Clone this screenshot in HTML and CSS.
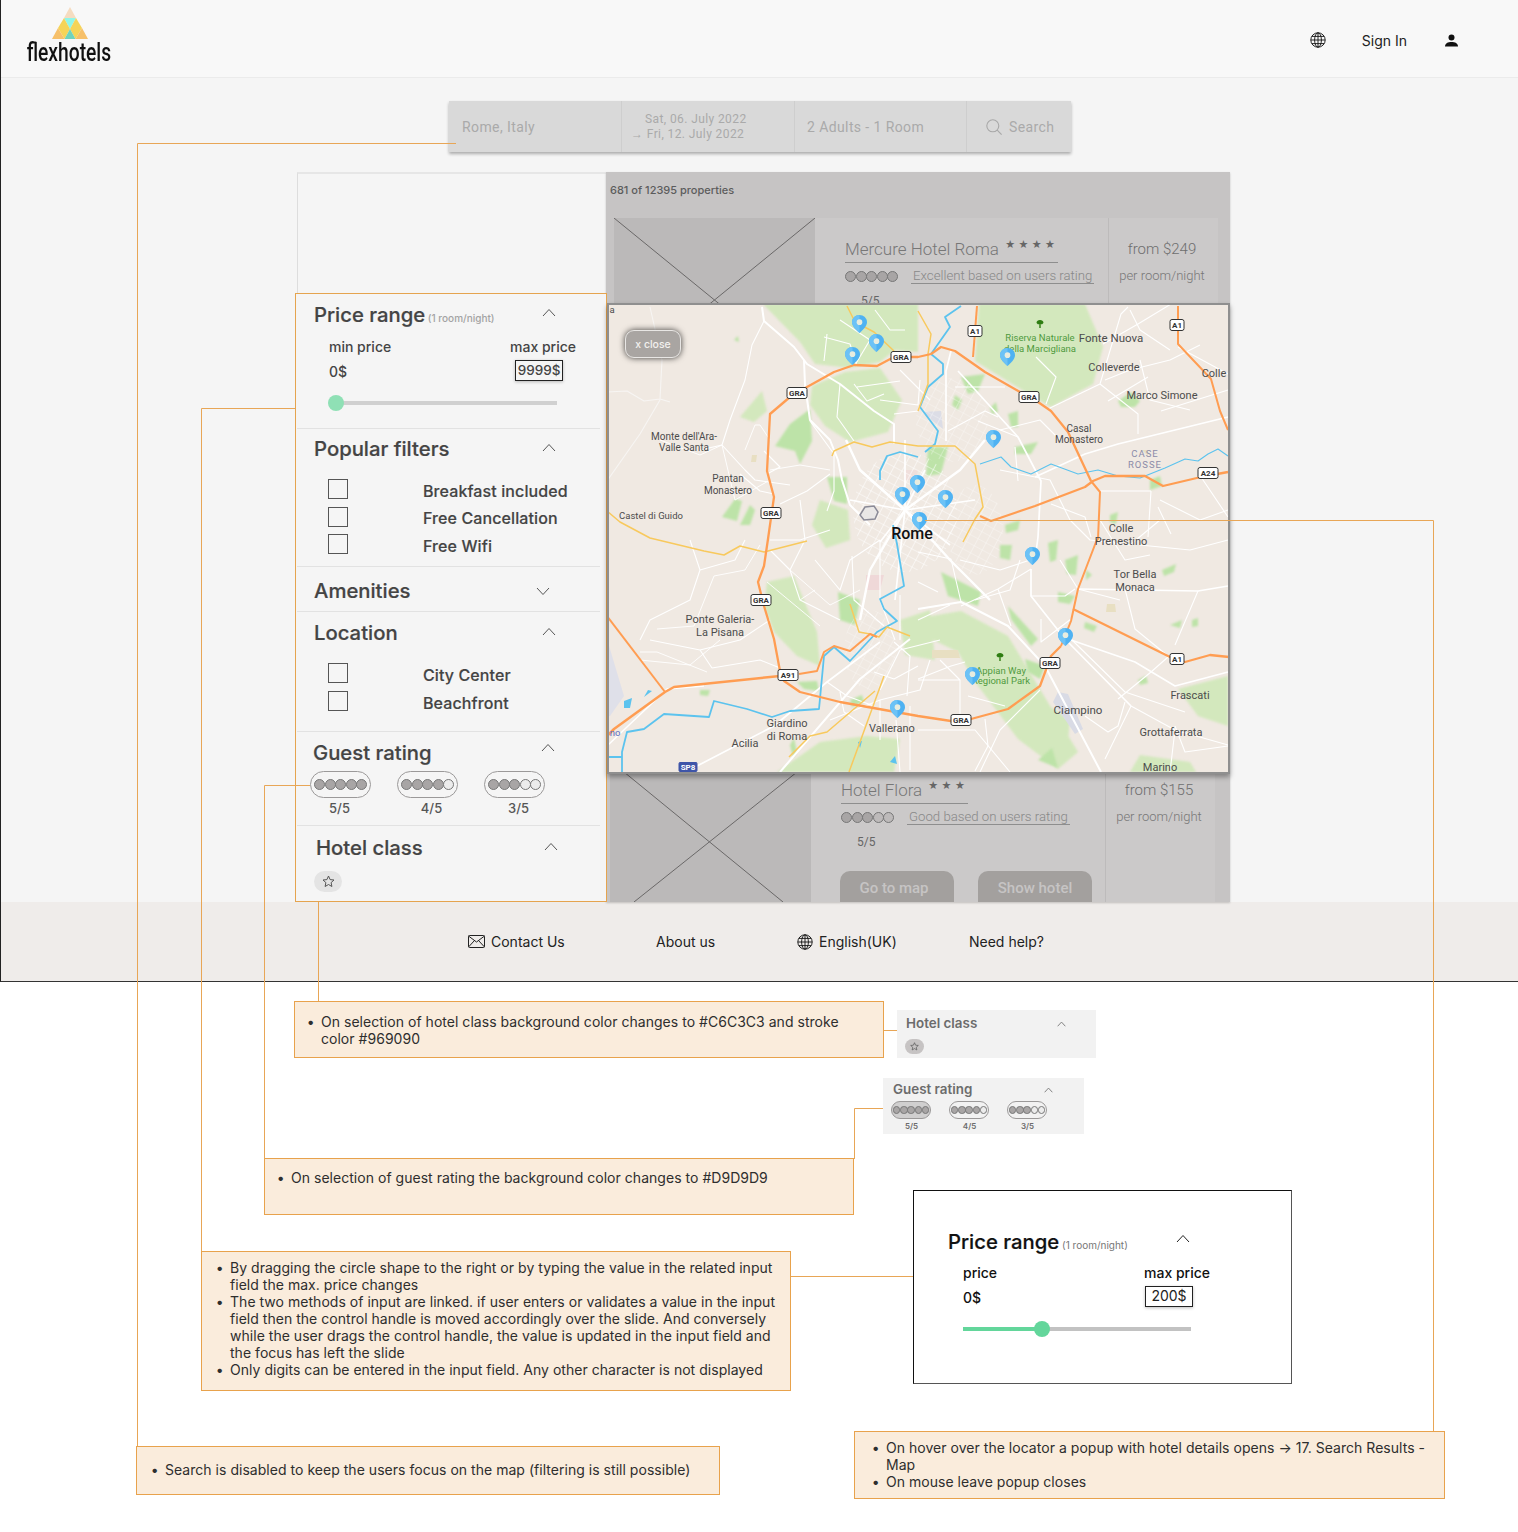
FILE: index.html
```html
<!DOCTYPE html>
<html lang="en">
<head>
    <meta charset="UTF-8">
    <meta name="viewport" content="width=device-width, initial-scale=1.0">
    <title>Search Results - Map - flexhotels</title>
    <link rel="stylesheet" href="styles.css">
</head>
<body>
<div class="page">
    <div class="mock">
        <header class="topbar">
            <div class="logo">
                <svg class="logo-mark" width="38" height="33" viewBox="0 0 38 33">
                    <polygon points="19,0 13,11 25,11" fill="#f6dcc0"/>
                    <polygon points="13,11 25,11 19,22" fill="#92f6e8"/>
                    <polygon points="13,11 19,22 13.5,32 7,21" fill="#f5d458"/>
                    <polygon points="25,11 19,22 24.5,32 31,21" fill="#f5d458"/>
                    <polygon points="19,22 13.5,32 24.5,32" fill="#6fd3bd"/>
                    <polygon points="7,21 1,32 13.5,32" fill="#f6c06a"/>
                    <polygon points="31,21 37,32 24.5,32" fill="#f6c06a"/>
                </svg>
                <span class="logo-text">flexhotels</span>
            </div>
            <div class="topbar-right">
                <svg class="globe" width="16" height="16" viewBox="0 0 16 16">
                    <circle cx="8" cy="8" r="7.2"/><ellipse cx="8" cy="8" rx="3.4" ry="7.2"/>
                    <path d="M8 .8v14.4M.8 8h14.4M1.8 4.4h12.4M1.8 11.6h12.4"/>
                </svg>
                <a class="signin" href="#">Sign In</a>
                <svg width="13" height="13" viewBox="0 0 13 13">
                    <circle cx="6.5" cy="3.4" r="3" fill="#111"/>
                    <path d="M0 12.5c0-3.4 3-4.6 6.5-4.6s6.5 1.2 6.5 4.6z" fill="#111"/>
                </svg>
            </div>
        </header>

        <div class="search-bar">
            <div class="search-seg seg-place">Rome, Italy</div>
            <div class="search-seg seg-dates">
                <span class="date-first">Sat, 06. July 2022</span>
                <span>&rarr; Fri, 12. July 2022</span>
            </div>
            <div class="search-seg seg-guests">2 Adults - 1 Room</div>
            <div class="search-seg seg-go">
                <svg width="16" height="16" viewBox="0 0 16 16" fill="none" stroke="#a8a8a8" stroke-width="1.1">
                    <circle cx="6.8" cy="6.8" r="6"/><path d="M11.2 11.2l4.4 4.4"/>
                </svg>
                Search
            </div>
        </div>

        <div class="frame">
            <aside class="sidebar">
                <div class="filters">
                    <section class="filter-section sec-price">
                        <div class="section-head">
                            <h2 class="section-title">Price range<small> (1 room/night)</small></h2>
                            <svg class="chev" width="14" height="9" viewBox="0 0 14 9"><path d="M1 8l6-6.5L13 8"/></svg>
                        </div>
                        <div class="price-grid">
                            <span>min price</span><span>max price</span>
                            <span class="price-min">0$</span><span class="price-input">9999$</span>
                        </div>
                        <div class="slider"><span class="slider-knob knob-start"></span></div>
                    </section>

                    <section class="filter-section sec-popular">
                        <div class="section-head">
                            <h2 class="section-title">Popular filters</h2>
                            <svg class="chev" width="14" height="9" viewBox="0 0 14 9"><path d="M1 8l6-6.5L13 8"/></svg>
                        </div>
                        <ul class="check-list">
                            <li><span class="check-box"></span><span class="check-label">Breakfast included</span></li>
                            <li><span class="check-box"></span><span class="check-label">Free Cancellation</span></li>
                            <li><span class="check-box"></span><span class="check-label">Free Wifi</span></li>
                        </ul>
                    </section>

                    <section class="filter-section sec-amenities">
                        <div class="section-head">
                            <h2 class="section-title">Amenities</h2>
                            <svg class="chev chev-down" width="14" height="9" viewBox="0 0 14 9"><path d="M1 1l6 6.5L13 1"/></svg>
                        </div>
                    </section>

                    <section class="filter-section sec-location">
                        <div class="section-head">
                            <h2 class="section-title">Location</h2>
                            <svg class="chev" width="14" height="9" viewBox="0 0 14 9"><path d="M1 8l6-6.5L13 8"/></svg>
                        </div>
                        <ul class="check-list">
                            <li><span class="check-box"></span><span class="check-label">City Center</span></li>
                            <li><span class="check-box"></span><span class="check-label">Beachfront</span></li>
                        </ul>
                    </section>

                    <section class="filter-section sec-guest">
                        <div class="section-head">
                            <h2 class="section-title">Guest rating</h2>
                            <svg class="chev" width="14" height="9" viewBox="0 0 14 9"><path d="M1 8l6-6.5L13 8"/></svg>
                        </div>
                        <div class="rating-row">
                            <div class="rating-item">
                                <div class="pill"><i class="dot"></i><i class="dot"></i><i class="dot"></i><i class="dot"></i><i class="dot"></i></div>
                                <div class="rating-label">5/5</div>
                            </div>
                            <div class="rating-item">
                                <div class="pill"><i class="dot"></i><i class="dot"></i><i class="dot"></i><i class="dot"></i><i class="dot dot-off"></i></div>
                                <div class="rating-label">4/5</div>
                            </div>
                            <div class="rating-item">
                                <div class="pill"><i class="dot"></i><i class="dot"></i><i class="dot"></i><i class="dot dot-off"></i><i class="dot dot-off"></i></div>
                                <div class="rating-label">3/5</div>
                            </div>
                        </div>
                    </section>

                    <section class="filter-section sec-class">
                        <div class="section-head">
                            <h2 class="section-title">Hotel class</h2>
                            <svg class="chev" width="14" height="9" viewBox="0 0 14 9"><path d="M1 8l6-6.5L13 8"/></svg>
                        </div>
                        <div class="star-pill">
                            <svg width="13" height="13" viewBox="0 0 13 13"><path d="M6.5 1l1.6 3.6 3.9.4-2.9 2.6.8 3.9-3.4-2-3.4 2 .8-3.9L1 5l3.9-.4z"/></svg>
                        </div>
                    </section>
                </div>
            </aside>

            <div class="results">
                <div class="result-count">681 of 12395 properties</div>

                <article class="card card-first">
                    <div class="card-img">
                        <svg viewBox="0 0 201 164" preserveAspectRatio="none"><path d="M0 0L201 164M201 0L0 164"/></svg>
                    </div>
                    <div class="card-info">
                        <div class="card-title">Mercure Hotel Roma <span class="card-stars">&#9733;&#9733;&#9733;&#9733;</span></div>
                        <div class="card-rating">
                            <div class="card-dots"><i class="dot"></i><i class="dot"></i><i class="dot"></i><i class="dot"></i><i class="dot"></i></div>
                            <span class="rating-text">Excellent based on users rating</span>
                        </div>
                        <div class="card-score">5/5</div>
                    </div>
                    <div class="card-price">
                        <div class="price-from">from $249</div>
                        <div class="price-per">per room/night</div>
                    </div>
                </article>

                <article class="card card-last">
                    <div class="card-img">
                        <svg viewBox="0 0 201 164" preserveAspectRatio="none"><path d="M14 13L173 143M187 13L24 143"/></svg>
                    </div>
                    <div class="card-info">
                        <div class="card-title">Hotel Flora <span class="card-stars">&#9733;&#9733;&#9733;</span></div>
                        <div class="card-rating">
                            <div class="card-dots"><i class="dot"></i><i class="dot"></i><i class="dot"></i><i class="dot dot-faint"></i><i class="dot dot-faint"></i></div>
                            <span class="rating-text">Good based on users rating</span>
                        </div>
                        <div class="card-score">5/5</div>
                        <div class="card-actions">
                            <a class="card-btn" href="#">Go to map</a>
                            <a class="card-btn" href="#">Show hotel</a>
                        </div>
                    </div>
                    <div class="card-price">
                        <div class="price-from">from $155</div>
                        <div class="price-per">per room/night</div>
                    </div>
                </article>
            </div>

            <div class="map">
                <svg class="map-svg" viewBox="609 305 619 467" width="619" height="467">
                    <defs>
                        <pattern id="cityGrid" width="9" height="8" patternUnits="userSpaceOnUse" patternTransform="rotate(28)">
                            <path d="M0 0H9M0 0V8" stroke="#fff" stroke-width="1.2"/>
                        </pattern>
                        <symbol id="pin" viewBox="0 0 16 19" overflow="visible">
                            <path d="M8 0C3.6 0 0 3.4 0 7.6 0 12 5 16.5 8 19c3-2.5 8-7 8-11.4C16 3.4 12.4 0 8 0z" fill="#4fb2f2"/>
                            <path d="M8 0C3.6 0 0 3.4 0 7.6 0 12 5 16.5 8 19z" fill="#6cc2f6"/>
                            <circle cx="8" cy="7.5" r="3" fill="#e8ecdf"/>
                        </symbol>
                    </defs>
                    <rect x="600" y="300" width="640" height="480" fill="#f0e9e2"/>

                    <g class="map-base">
                        <g class="map-soft" fill="#d3e8bd">
                            <path d="M763 304L800 342L815 364L850 368L880 362L895 350L918 352V304Z"/>
                            <path d="M812 386L845 372L880 368L902 400L888 432L850 442L825 426L810 405Z"/>
                            <path d="M979 304H1085L1103 347L1093 384L1051 407L1024 391L975 361Z"/>
                            <path d="M740 417L762 391L767 411L754 422Z"/>
                            <path d="M767 582L794 576L817 632L820 666L797 656L774 632L764 606Z"/>
                            <path d="M777 772L820 742L867 736L900 739L894 772Z"/>
                            <path d="M925 617L961 611L1008 636L1038 686L1078 752L1058 769L1018 739L988 699L975 682L958 652L925 636Z"/>
                            <path d="M1178 689L1228 676V726L1198 716Z"/>
                            <path d="M1130 772L1140 755L1190 762L1196 772Z"/>
                            <path d="M820 500L848 510L850 540L826 548L812 525Z"/>
                            <path d="M900 620L930 610L935 660L905 655Z"/>
                            <path d="M1040 370L1062 380L1060 398L1040 392Z"/>
                            <path d="M1040 700L1070 720L1068 740L1042 722Z"/>
                        </g>
                        <g class="map-soft" fill="#bde3a8">
                            <path d="M775 446L790 424L810 409L812 441L800 464L795 451Z"/>
                            <path d="M722 517L735 499L742 501L737 521Z"/>
                            <path d="M827 477L847 477L847 504L834 501Z"/>
                            <path d="M797 682L817 681L819 691L804 689Z"/>
                            <path d="M941 572L981 592L978 606L948 596Z"/>
                            <path d="M1008 606L1038 639L1031 646L1011 619Z"/>
                            <path d="M1025 659L1045 666L1040 679L1028 672Z"/>
                            <path d="M928 447L948 447L941 474L926 476Z"/>
                            <path d="M961 377L985 374L978 391L968 394Z"/>
                            <path d="M1008 414L1018 411L1018 427L1011 427Z"/>
                            <path d="M1015 447L1038 442L1031 454L1015 454Z"/>
                            <path d="M1118 401L1131 392L1140 401L1135 407L1121 407Z"/>
                            <path d="M1058 592L1075 596L1070 604L1058 602Z"/>
                            <path d="M1162 570L1176 564L1174 572L1164 576Z"/>
                            <path d="M1085 622L1097 626L1094 632L1084 628Z"/>
                            <path d="M1048 543L1058 540L1056 560L1050 562Z"/>
                            <path d="M740 525L750 505L755 510L750 525Z"/>
                            <path d="M1065 560L1078 555L1076 575L1067 574Z"/>
                            <path d="M1038 760L1052 748L1058 768Z"/>
                            <path d="M838 592L860 600L855 625L840 620Z"/>
                            <path d="M734 340L738 336L739 342Z"/>
                            <path d="M700 690L710 690L708 696L700 695Z"/>
                            <path d="M790 745L794 738L797 752L793 758Z"/>
                            <path d="M850 700L862 695L864 702L852 707Z"/>
                            <path d="M990 408L996 402L998 412L992 414Z"/>
                            <path d="M1000 545L1012 545L1010 560L1000 558Z"/>
                            <path d="M1170 625L1182 620L1180 628Z"/>
                            <path d="M1086 570L1092 575L1086 580Z"/>
                            <path d="M1138 680L1146 676L1148 683L1140 685Z"/>
                            <path d="M1192 620L1198 618L1198 626L1192 627Z"/>
                            <path d="M1150 480L1160 476L1162 486L1150 490Z"/>
                            <path d="M1110 515L1118 512L1116 524L1110 522Z"/>
                            <path d="M955 395L962 400L958 410L952 405Z"/>
                            <path d="M1005 525L1020 520L1018 530L1006 533Z"/>
                        </g>
                        <g fill="#e8dfc2">
                            <path d="M752 455L757 455L756 462L751 462Z"/>
                            <path d="M1107 604L1115 604L1116 612L1106 612Z"/>
                            <path d="M932 650L958 650L960 658L932 658Z"/>
                            <path d="M1142 450L1148 450L1148 456Z"/>
                            <path d="M905 470L918 470L916 480L904 480Z" fill="#f0dfdc"/>
                            <path d="M866 575L884 575L880 590L866 590Z" fill="#efd8d8"/>
                        </g>
                        <path d="M607 639L624 696L610 716H607Z" fill="#dfe0e9"/>
                        <path d="M1058 692L1068 694L1083 729L1075 734L1053 702Z" fill="#d9dbe5"/>
                        <path d="M923 412L941 411L943 429L933 421Z" fill="#dcdde6"/>

                        <ellipse cx="905" cy="512" rx="52" ry="60" fill="url(#cityGrid)" opacity=".9"/>
                        <ellipse cx="952" cy="420" rx="36" ry="42" fill="url(#cityGrid)" opacity=".5"/>
                        <ellipse cx="975" cy="530" rx="28" ry="45" fill="url(#cityGrid)" opacity=".55"/>
                        <ellipse cx="870" cy="650" rx="26" ry="40" fill="url(#cityGrid)" opacity=".5"/>

                        <g fill="none" stroke="#fff" stroke-width="1.1" stroke-linejoin="round">
                            <path stroke-width="2" d="M762 307L764 321L794 347L807 364L840 384L874 411L894 424L894 444"/>
                            <path stroke-width="2" d="M804 360L805 385L810 420L830 440L838 460L842 480L850 505L870 525"/>
                            <path stroke-width="2.4" d="M905 510L860 470L846 440M905 510L960 470L985 440M905 510L870 570L860 620M905 510L950 560L990 600"/>
                            <path d="M764 321L752 345L745 380L730 420L722 445L745 470L755 480L790 485"/>
                            <path stroke="#f7f5f3" d="M607 392L627 391L644 401L660 399L670 402M660 400L640 434L607 481M650 307L662 360L660 399"/>
                            <path d="M700 450L722 445M690 540L700 570L690 600L650 620L640 640M700 570L735 560L745 540"/>
                            <path d="M650 640L700 650L712 668M700 650L740 640L770 620M712 668L760 660L780 668"/>
                            <path stroke-width="1.7" d="M697 766L774 726L827 682L880 642"/>
                            <path stroke-width="2" d="M780 772L860 679L910 639"/>
                            <path stroke-width="1.4" d="M607 746L667 689L704 686"/>
                            <path d="M800 500L805 540L790 570L800 600L840 620M770 540L800 540L830 530M790 570L770 550"/>
                            <path d="M815 560L840 590L850 560L880 540M880 540L880 600L895 640"/>
                            <path stroke-width="1.7" d="M880 542L905 510L925 470M860 470L905 510L950 545M905 440L905 510L895 600"/>
                            <path stroke-width="1.7" d="M850 500L905 510L975 500"/>
                            <path d="M880 690L900 650L940 640M880 700L920 690L930 660M896 720L900 772M830 720L880 700L880 740"/>
                            <path stroke-width="2" d="M918 609L961 602L1008 626L1045 666L1101 772"/>
                            <path stroke-width="1.7" d="M1031 569L1031 596L1065 639L1131 706"/>
                            <path stroke-width="1.6" d="M1068 639L1135 662L1175 686L1228 672"/>
                            <path stroke-width="1.7" d="M946 441L946 371L951 351"/>
                            <path stroke-width="1.7" d="M958 371L1018 437L1041 481L1038 537L1035 560"/>
                            <path stroke-width="1.6" d="M1035 477L1085 454L1118 444L1228 417"/>
                            <path d="M1048 409L1100 384L1121 314L1128 307M1036 357L1056 377L1046 404M1100 384L1138 414L1138 434"/>
                            <path d="M1105 380L1130 370L1170 360L1200 345M1130 310L1140 330L1170 350M1140 360L1150 400L1190 410"/>
                            <path stroke-width="1.5" d="M1078 589L1198 591L1228 586"/>
                            <path d="M1198 591L1175 645M1125 589L1135 629L1168 656M1118 699L1151 672L1168 657"/>
                            <path d="M1131 706L1175 730L1228 745M1131 706L1105 759M1175 730L1170 772M1040 690L1000 730L980 772"/>
                            <path d="M918 730L975 730L1010 772M960 720L960 680L940 660M918 680L960 680"/>
                            <path d="M1000 430L1040 420L1060 440M1000 470L1050 480L1070 520L1090 540L1130 545L1160 520"/>
                            <path d="M1100 520L1125 560L1150 555M1160 500L1200 520L1228 510M1140 545L1190 550L1228 540"/>
                            <path d="M960 560L1000 570L1030 560M975 600L1010 590L1020 560M1060 560L1078 589L1120 600"/>
                            <path d="M840 320L870 340L855 365M875 310L890 330L905 330M900 370L930 400M880 400L918 405L920 380"/>
                            <path stroke-width=".9" d="M660 440L700 455L722 445M722 445L735 500L770 480M770 440L760 425L755 425L745 450M770 470L800 465L830 470"/>
                            <path stroke-width=".9" d="M640 660L690 665L720 640M640 652L657 652L707 672M657 629L694 626L714 576M714 576L745 570L760 545"/>
                            <path stroke-width=".9" d="M767 582L820 626M790 570L830 605L860 590M800 600L815 590"/>
                            <path d="M852 556L854 600L884 626M900 595V640M827 682L847 696L874 706M840 692L844 712L864 726M874 672L894 679L918 666"/>
                            <path d="M894 642L910 656L907 696M910 706V770M918 552L951 559L961 602M918 582L938 592M918 620L950 605"/>
                            <path d="M961 606L998 589L1031 569M998 589L1011 626M1031 596L1065 596L1075 589M1041 619V642L1071 619"/>
                            <path d="M1071 639L1125 692L1185 712M968 696L1005 706M985 719L988 746L975 771M918 679L951 666L965 662"/>
                            <path d="M1125 702L1118 726L1108 732L1085 716M1175 726L1185 752L1228 746"/>
                            <path d="M1103 344L1138 324L1171 304M1178 347L1228 374M1108 401L1148 377M1161 411L1228 390"/>
                            <path d="M1098 491L1151 491M1151 491L1148 537M1201 477L1228 517M1158 507L1171 534"/>
                            <path d="M1051 504L1085 517L1091 537M1015 447L1018 481M978 421L1018 437M955 387L1005 387M948 431L985 411L998 417"/>
                            <path d="M894 414L918 411M857 387L900 381M824 337L850 344L857 366M827 334L824 361M854 384L867 401L884 394M840 384L837 417L854 441"/>
                            <path d="M810 421L834 454L834 491L827 511M780 504L807 491L830 474M774 494L760 491L740 474M764 451L780 467L767 474"/>
                        </g>

                        <g fill="none" stroke="#5cc3ee" stroke-width="1.8" stroke-linejoin="round">
                            <path d="M961 306L945 317L950 327L931 354L943 364L943 374L928 387L920 407L938 431L935 444L925 452"/>
                            <path d="M880 480L880 471L887 456L900 452L918 457"/>
                            <path d="M893 525L897 544L904 586L880 599L884 609L897 621L877 632L850 661L834 647L824 656L819 709L790 711L772 717L747 709L714 701L709 717L664 714L644 729L627 732L622 752V772M607 757H622"/>
                            <path stroke-width="1.1" d="M980 464L1001 457L1011 467L1031 474L1051 464L1078 474L1098 470L1118 476L1140 478L1165 468L1185 459L1198 461L1208 454L1218 449L1228 456"/>
                        </g>
                        <g fill="#5cc3ee">
                            <path d="M624 701L632 698L630 708L624 708Z"/>
                            <path d="M648 690L652 691L644 697Z"/>
                            <path d="M858 742L862 741L860 748Z"/>
                            <path d="M890 762L895 756L897 764Z"/>
                        </g>

                        <g fill="none" stroke="#f8c95d" stroke-width="1.5" stroke-linejoin="round">
                            <path d="M847 306L855 322L874 332L894 351"/>
                            <path d="M918 311L931 334L928 354V384L918 411"/>
                            <path d="M832 456L834 451L854 442L872 447L890 442L918 446L955 446L975 464L983 507L975 519L963 542"/>
                            <path d="M607 511L620 522L650 538L704 551L724 555L740 546L764 552L807 541"/>
                            <path d="M789 757L810 736L827 732L875 691"/>
                            <path d="M849 772L860 742L884 676"/>
                            <path d="M850 604L859 632L870 634L879 637L887 627L910 636"/>
                        </g>

                        <g fill="none" stroke="#ff9d52" stroke-width="2" stroke-linejoin="round">
                            <path stroke-width="2.3" d="M780 671L774 639L764 606L758 582L764 566L768 539L774 497L767 471L770 414L790 397L807 387L834 372L854 365L877 366L894 357L918 357L931 354L941 347L955 351L985 372L1020 392L1038 402L1051 411L1068 432L1091 481"/>
                            <path d="M1091 481L1100 492L1098 539L1096 542L1078 589L1071 621L1061 646"/>
                            <path stroke-width="2.3" d="M1061 646L1051 656L1040 686L1008 709L971 719L951 721L918 716L840 702L800 692L784 681L780 671"/>
                            <path stroke-width="2.3" d="M980 516L991 521L1035 506L1085 487L1093 481L1105 476H1145L1163 486L1201 477L1228 472"/>
                            <path d="M977 306L973 357"/>
                            <path d="M1178 306V344L1211 379L1220 411L1228 430"/>
                            <path stroke-width="2.3" d="M1073 609L1170 657L1185 662L1210 655L1229 657"/>
                            <path stroke-width="2.5" d="M780 676L674 687L665 692L614 729L607 736"/>
                            <path d="M607 616L665 692"/>
                            <path d="M799 674L817 671L824 652L834 646L850 651L870 634L877 637"/>
                        </g>
                    </g>

                    <path d="M860 515L865 507L874 506L878 512L875 519L864 520Z" fill="#e9e7e6" stroke="#8a8a97" stroke-width="1.5"/>

                    <g class="map-shields">
                        <g transform="translate(901 357)"><rect x="-10" y="-5.5" width="20" height="11" rx="2"/><text y="3">GRA</text></g>
                        <g transform="translate(797 393)"><rect x="-10" y="-5.5" width="20" height="11" rx="2"/><text y="3">GRA</text></g>
                        <g transform="translate(1029 397)"><rect x="-10" y="-5.5" width="20" height="11" rx="2"/><text y="3">GRA</text></g>
                        <g transform="translate(771 513)"><rect x="-10" y="-5.5" width="20" height="11" rx="2"/><text y="3">GRA</text></g>
                        <g transform="translate(761 600)"><rect x="-10" y="-5.5" width="20" height="11" rx="2"/><text y="3">GRA</text></g>
                        <g transform="translate(1050 663)"><rect x="-10" y="-5.5" width="20" height="11" rx="2"/><text y="3">GRA</text></g>
                        <g transform="translate(961 720)"><rect x="-10" y="-5.5" width="20" height="11" rx="2"/><text y="3">GRA</text></g>
                        <g transform="translate(975 331)"><rect x="-7" y="-5.5" width="14" height="11" rx="2"/><text y="3">A1</text></g>
                        <g transform="translate(1177 325)"><rect x="-7" y="-5.5" width="14" height="11" rx="2"/><text y="3">A1</text></g>
                        <g transform="translate(1177 659)"><rect x="-7" y="-5.5" width="14" height="11" rx="2"/><text y="3">A1</text></g>
                        <g transform="translate(1208 473)"><rect x="-10" y="-5.5" width="20" height="11" rx="2"/><text y="3">A24</text></g>
                        <g transform="translate(788 675)"><rect x="-10" y="-5.5" width="20" height="11" rx="2"/><text y="3">A91</text></g>
                        <g class="shield-blue" transform="translate(688 767)"><rect x="-9" y="-4.5" width="18" height="9" rx="1"/><text y="3">SP8</text></g>
                    </g>

                    <g fill="#2f7d12">
                        <path d="M1040 320a3.5 3 0 0 1 3.5 2.6a1.8 1.8 0 0 1-2.8 1.3V328h-1.4v-4.1a1.8 1.8 0 0 1-2.8-1.3a3.5 3 0 0 1 3.5-2.6z"/>
                        <path d="M1000 653a3.5 3 0 0 1 3.5 2.6a1.8 1.8 0 0 1-2.8 1.3V661h-1.4v-4.1a1.8 1.8 0 0 1-2.8-1.3a3.5 3 0 0 1 3.5-2.6z"/>
                    </g>

                    <g class="map-labels">
                        <text class="lbl-green" x="1040" y="341">Riserva Naturale</text>
                        <text class="lbl-green" x="1040" y="352">della Marcigliana</text>
                        <text class="lbl-green" x="1001" y="674">Appian Way</text>
                        <text class="lbl-green" x="1001" y="684">Regional Park</text>
                        <text class="lbl-big" x="1111" y="342">Fonte Nuova</text>
                        <text x="1114" y="371">Colleverde</text>
                        <text x="1214" y="377">Colle</text>
                        <text x="1162" y="399">Marco Simone</text>
                        <text class="lbl-small" x="1079" y="432">Casal</text>
                        <text class="lbl-small" x="1079" y="443">Monastero</text>
                        <text class="lbl-case" x="1145" y="457">CASE</text>
                        <text class="lbl-case" x="1145" y="468">ROSSE</text>
                        <text class="lbl-small" x="684" y="440">Monte dell'Ara-</text>
                        <text class="lbl-small" x="684" y="451">Valle Santa</text>
                        <text class="lbl-small" x="728" y="482">Pantan</text>
                        <text class="lbl-small" x="728" y="494">Monastero</text>
                        <text class="lbl-tiny" x="651" y="519">Castel di Guido</text>
                        <text class="lbl-city" x="912" y="539">Rome</text>
                        <text x="1121" y="532">Colle</text>
                        <text x="1121" y="545">Prenestino</text>
                        <text x="1135" y="578">Tor Bella</text>
                        <text x="1135" y="591">Monaca</text>
                        <text x="720" y="623">Ponte Galeria-</text>
                        <text x="720" y="636">La Pisana</text>
                        <text x="1190" y="699">Frascati</text>
                        <text class="lbl-big" x="1078" y="714">Ciampino</text>
                        <text x="1171" y="736">Grottaferrata</text>
                        <text x="1160" y="771">Marino</text>
                        <text x="787" y="727">Giardino</text>
                        <text x="787" y="740">di Roma</text>
                        <text x="745" y="747">Acilia</text>
                        <text x="892" y="732">Vallerano</text>
                        <text class="lbl-blue" x="615" y="736">no</text>
                        <text class="lbl-tiny" x="612" y="313">a</text>
                    </g>

                    <use href="#pin" x="852" y="315" width="15" height="18"/>
                    <use href="#pin" x="869" y="334" width="15" height="18"/>
                    <use href="#pin" x="845" y="347" width="15" height="18"/>
                    <use href="#pin" x="1000" y="348" width="15" height="18"/>
                    <use href="#pin" x="986" y="430" width="15" height="18"/>
                    <use href="#pin" x="910" y="475" width="15" height="18"/>
                    <use href="#pin" x="895" y="487" width="15" height="18"/>
                    <use href="#pin" x="938" y="490" width="15" height="18"/>
                    <use href="#pin" x="912" y="512" width="15" height="18"/>
                    <use href="#pin" x="1025" y="547" width="15" height="18"/>
                    <use href="#pin" x="1058" y="628" width="15" height="18"/>
                    <use href="#pin" x="965" y="667" width="15" height="18"/>
                    <use href="#pin" x="890" y="700" width="15" height="18"/>
                </svg>
                <button class="map-close">x close</button>
            </div>
        </div>

        <footer class="footer">
            <a href="#">
                <svg width="17" height="13" viewBox="0 0 17 13" fill="none" stroke="#222"><rect x=".5" y=".5" width="16" height="12" rx="1"/><path d="M.5 1l8 6 8-6M.5 12l6-6.5M16.5 12l-6-6.5"/></svg>
                Contact Us
            </a>
            <a href="#">About us</a>
            <a href="#">
                <svg class="globe" width="16" height="16" viewBox="0 0 16 16">
                    <circle cx="8" cy="8" r="7.2"/><ellipse cx="8" cy="8" rx="3.4" ry="7.2"/>
                    <path d="M8 .8v14.4M.8 8h14.4M1.8 4.4h12.4M1.8 11.6h12.4"/>
                </svg>
                English(UK)
            </a>
            <a href="#">Need help?</a>
        </footer>
    </div>

    <div class="notes">
        <div class="note note-class">
            <ul>
                <li>On selection of hotel class background color changes to #C6C3C3 and stroke color #969090</li>
            </ul>
        </div>
        <div class="note note-guest">
            <ul>
                <li>On selection of guest rating the background color changes to #D9D9D9</li>
            </ul>
        </div>
        <div class="note note-slider">
            <ul>
                <li>By dragging the circle shape to the right or by typing the value in the related input field the max. price changes</li>
                <li>The two methods of input are linked. if user enters or validates a value in the input field then the control handle is moved accordingly over the slide. And conversely while the user drags the control handle, the value is updated in the input field and the focus has left the slide</li>
                <li>Only digits can be entered in the input field. Any other character is not displayed</li>
            </ul>
        </div>
        <div class="note note-search">
            <ul>
                <li>Search is disabled to keep the users focus on the map (filtering is still possible)</li>
            </ul>
        </div>
        <div class="note note-hover">
            <ul>
                <li>On hover over the locator a popup with hotel details opens &rarr; 17. Search Results - Map</li>
                <li>On mouse leave popup closes</li>
            </ul>
        </div>

        <div class="mini mini-class">
            <div class="mini-head">
                <span>Hotel class</span>
                <svg class="chev" width="9" height="6" viewBox="0 0 14 9"><path d="M1 8l6-6.5L13 8"/></svg>
            </div>
            <div class="mini-star">
                <svg width="9" height="9" viewBox="0 0 13 13"><path d="M6.5 1l1.6 3.6 3.9.4-2.9 2.6.8 3.9-3.4-2-3.4 2 .8-3.9L1 5l3.9-.4z"/></svg>
            </div>
        </div>

        <div class="mini mini-guest">
            <div class="mini-head">
                <span>Guest rating</span>
                <svg class="chev" width="9" height="6" viewBox="0 0 14 9"><path d="M1 8l6-6.5L13 8"/></svg>
            </div>
            <div class="mini-row">
                <div class="mini-item">
                    <div class="pill pill-on"><i class="dot"></i><i class="dot"></i><i class="dot"></i><i class="dot"></i><i class="dot"></i></div>
                    <div class="mini-label">5/5</div>
                </div>
                <div class="mini-item">
                    <div class="pill"><i class="dot"></i><i class="dot"></i><i class="dot"></i><i class="dot"></i><i class="dot dot-off"></i></div>
                    <div class="mini-label">4/5</div>
                </div>
                <div class="mini-item">
                    <div class="pill"><i class="dot"></i><i class="dot"></i><i class="dot"></i><i class="dot dot-off"></i><i class="dot dot-off"></i></div>
                    <div class="mini-label">3/5</div>
                </div>
            </div>
        </div>

        <div class="price-box">
            <div class="section-head">
                <h2 class="section-title">Price range<small> (1 room/night)</small></h2>
                <svg class="chev" width="14" height="9" viewBox="0 0 14 9"><path d="M1 8l6-6.5L13 8"/></svg>
            </div>
            <div class="price-grid">
                <span>price</span><span>max price</span>
                <span class="price-min">0$</span><span class="price-input">200$</span>
            </div>
            <div class="slider slider-wide">
                <span class="slider-fill"></span>
                <span class="slider-knob knob-set"></span>
            </div>
        </div>
    </div>

    <svg class="connectors" width="1518" height="1532" viewBox="0 0 1518 1532">
        <path d="M456 143.5H137.5V1446"/>
        <path d="M295 408.5H201.5V1251"/>
        <path d="M310 785.5H264.5V1159"/>
        <path d="M318.5 902V1001"/>
        <path d="M884 1030.5H897"/>
        <path d="M854.5 1159V1108.5H883"/>
        <path d="M791 1276.5H913"/>
        <path d="M925 520.5H1433.5V1431"/>
    </svg>
</div>
</body>
</html>
```

FILE: styles.css
```css
body {
    margin: 0;
    background-color: white;
    font-family: Inter, "Liberation Sans", sans-serif;
    color: #333;
}
ul {
    margin: 0;
}
h2 {
    margin: 0;
}
.page {
    position: relative;
    width: 1518px;
    height: 1532px;
    overflow: hidden;
}
.mock {
    box-sizing: border-box;
    height: 982px;
    background-color: #f5f5f5;
    border-left: 1px solid #222;
    border-bottom: 1px solid #333;
}

/* top bar */
.topbar {
    box-sizing: border-box;
    height: 78px;
    padding: 7px 60px 0 26px;
    background-color: #f8f8f8;
    border-bottom: 1px solid #ebebeb;
    display: flex;
    justify-content: space-between;
}
.logo {
    display: flex;
    flex-direction: column;
    align-items: center;
    width: 85px;
}
.logo-mark {
    display: block;
}
.logo-text {
    font-family: Roboto, sans-serif;
    font-size: 25px;
    font-weight: 500;
    line-height: 24px;
    color: #111;
    margin: 1px 0 0 -2px;
    transform: scaleX(0.77);
}
.topbar-right {
    display: flex;
    align-items: center;
    height: 64px;
    margin-top: 1px;
}
.globe {
    fill: none;
    stroke: #111;
    stroke-width: 0.9;
}
.signin {
    font-size: 14px;
    color: #222;
    text-decoration: none;
    margin: 0 38px 0 36px;
}

/* disabled search bar */
.search-bar {
    display: flex;
    width: 622px;
    height: 51px;
    margin: 23px 0 0 448px;
    background-color: #d9d9d9;
    box-shadow: 0 2px 3px rgba(0,0,0,0.3);
    font-family: Roboto, sans-serif;
    font-size: 14px;
    color: #aaa;
}
.search-seg {
    box-sizing: border-box;
    border-left: 1px solid #cecece;
    display: flex;
    align-items: center;
    letter-spacing: 0.4px;
}
.seg-place {
    width: 172px;
    padding-left: 13px;
    border-left: 0;
}
.seg-dates {
    width: 173px;
    padding-left: 9px;
    font-size: 12px;
    line-height: 15px;
    flex-direction: column;
    align-items: flex-start;
    justify-content: center;
}
.date-first {
    margin-left: 14px;
}
.seg-guests {
    width: 172px;
    padding-left: 12px;
}
.seg-go {
    flex: 1;
    padding-left: 19px;
    gap: 7px;
}

/* frame with filters, results and map */
.frame {
    position: relative;
    display: flex;
    width: 933px;
    height: 730px;
    margin: 20px 0 0 296px;
}
.sidebar {
    box-sizing: border-box;
    width: 309px;
    padding-top: 121px;
    border-top: 2px solid #e6e6e6;
    border-left: 1px solid #ddd;
}
.filters {
    box-sizing: border-box;
    width: 312px;
    height: 609px;
    margin: -2px 0 0 -3px;
    background-color: #f5f5f5;
    border: 1px solid #e5a44f;
    position: relative;
    z-index: 1;
}
.filter-section {
    margin: 0 6px 0 1px;
    padding-left: 17px;
    border-bottom: 1px solid #e2e2e2;
}
.filter-section:last-child {
    border-bottom: 0;
}
.sec-price {
    padding-top: 8px;
    padding-bottom: 23px;
}
.sec-popular {
    padding-top: 6px;
    padding-bottom: 12px;
}
.sec-amenities {
    padding-top: 10px;
    padding-bottom: 8px;
}
.sec-location {
    padding-top: 7px;
    padding-bottom: 20px;
}
.sec-guest {
    padding-top: 7px;
    padding-bottom: 9px;
    padding-left: 16px;
}
.sec-class {
    padding-top: 8px;
    padding-left: 19px;
}
.section-head {
    display: flex;
    justify-content: space-between;
    align-items: center;
    width: 242px;
    height: 26px;
}
.section-title {
    margin-top: 2px;
    font-size: 20.3px;
    line-height: 26px;
    font-weight: 500;
    color: #444;
    white-space: nowrap;
    -webkit-text-stroke: 0.2px #444;
}
.sec-price .section-title {
    margin-top: 2px;
}
.section-title small {
    font-size: 10px;
    font-weight: 500;
    color: #a3a3a3;
    -webkit-text-stroke: 0;
}
.chev {
    fill: none;
    stroke: #555;
    stroke-width: 1;
    margin-top: -2px;
}
.sec-price .chev {
    margin-top: -5px;
}
.sec-guest .chev {
    margin-top: -8px;
}
.sec-class .chev {
    margin-top: 0;
}
.chev-down {
    margin: 2px 6px 0 0;
}
.price-grid {
    display: grid;
    grid-template-columns: 181px auto;
    grid-template-rows: 17px 21px;
    row-gap: 5px;
    justify-content: start;
    align-items: center;
    margin: 10px 0 0 15px;
    font-size: 14px;
    font-weight: 500;
    line-height: 17px;
    color: #444;
}
.price-min {
    padding-top: 2px;
}
.price-input {
    box-sizing: border-box;
    width: 48px;
    height: 21px;
    margin-left: 5px;
    border: 1px solid #222;
    box-shadow: 0 1px 3px rgba(0,0,0,0.25);
    font-size: 13.5px;
    line-height: 18px;
    text-align: center;
}
.slider {
    position: relative;
    width: 221px;
    height: 4px;
    margin: 20px 0 0 22px;
    background-color: #d0d0d0;
}
.slider-knob {
    position: absolute;
    top: -6px;
    width: 16px;
    height: 16px;
    border-radius: 50%;
}
.knob-start {
    left: -8px;
    background-color: #8fe0b5;
}
.check-list {
    list-style: none;
    margin: 18px 0 0;
    padding: 0 0 0 14px;
    font-size: 16px;
    font-weight: 500;
    letter-spacing: 0.1px;
    color: #444;
    -webkit-text-stroke: 0.15px #444;
}
.check-list li {
    display: flex;
    align-items: center;
    height: 20px;
    margin-bottom: 7.5px;
    line-height: 24px;
}
.check-list li:last-child {
    margin-bottom: 0;
}
.check-label {
    padding-top: 3px;
}
.sec-location .check-label {
    padding-top: 4px;
}
.check-box {
    box-sizing: border-box;
    width: 20px;
    height: 20px;
    margin-right: 75px;
    border: 1px solid #555;
}
.rating-row {
    display: flex;
    gap: 26px;
    margin: 6px 0 0 -3px;
}
.pill {
    box-sizing: border-box;
    display: flex;
    align-items: center;
    justify-content: center;
    width: 61px;
    height: 27px;
    border: 1.5px solid #9b9999;
    border-radius: 14px;
}
.dot {
    box-sizing: border-box;
    flex: none;
    width: 11px;
    height: 11px;
    margin-right: -0.4px;
    border: 1px solid #777;
    border-radius: 50%;
    background-color: #a8a5a5;
}
.dot-off {
    background-color: #ececec;
}
.dot-faint {
    background-color: #bdbaba;
}
.rating-label {
    margin-top: 2px;
    padding-right: 2px;
    font-size: 13px;
    line-height: 16px;
    font-weight: 500;
    color: #555;
    text-align: center;
}
.rating-item + .rating-item .rating-label {
    padding: 0 0 0 8px;
}
.star-pill {
    display: flex;
    align-items: center;
    justify-content: center;
    width: 28px;
    height: 21px;
    margin: 11px 0 0 -2px;
    border-radius: 11px;
    background-color: #e4e4e4;
}
.star-pill svg, .mini-star svg {
    fill: none;
    stroke: #555;
    stroke-width: 1;
}

/* result list behind the overlay */
.results {
    flex: 1;
    overflow: hidden;
    background-color: #c6c4c4;
    box-shadow: 0 1px 2px rgba(0,0,0,0.2);
}
.result-count {
    padding: 11px 0 0 4px;
    font-size: 11px;
    line-height: 14px;
    font-weight: 500;
    color: #5c5c5c;
}
.card {
    display: flex;
    height: 164px;
    background-color: #cbc9c9;
    font-family: Roboto, sans-serif;
    font-weight: 300;
    color: #777;
}
.card-first {
    width: 604px;
    margin: 21px 0 0 8px;
}
.card-last {
    width: 605px;
    margin: 377px 0 0 4px;
}
.card-img {
    flex: none;
    width: 201px;
    background-color: #bbb9b9;
}
.card-img svg {
    display: block;
    width: 100%;
    height: 100%;
    fill: none;
    stroke: #6a6868;
    stroke-width: 1;
}
.card-info {
    flex: 1;
    padding: 21px 0 0 30px;
}
.card-title {
    display: inline-block;
    position: relative;
    border-bottom: 1px solid #8e8e8e;
    font-size: 17px;
    line-height: 20px;
}
.card-stars {
    position: relative;
    top: -7px;
    margin-left: 2px;
    font-family: "DejaVu Sans", sans-serif;
    font-size: 11px;
    font-weight: 400;
    letter-spacing: 3.4px;
    color: #666;
}
.card-rating {
    display: flex;
    align-items: center;
    height: 14px;
    margin-top: 6px;
}
.card-dots {
    display: flex;
}
.rating-text {
    margin-left: 13px;
    padding: 0 2px;
    border-bottom: 1px solid #8e8e8e;
    font-size: 13.2px;
    line-height: 14px;
    color: #888;
}
.card-score {
    margin: 11px 0 0 16px;
    font-size: 12px;
    line-height: 14px;
    font-weight: 400;
    color: #666;
}
.card-actions {
    display: flex;
    gap: 24px;
    margin: 22px 0 0 -1px;
}
.card-btn {
    box-sizing: border-box;
    width: 114px;
    height: 40px;
    border-radius: 10px;
    background-color: #a3a09e;
    color: #c6c4c4;
    font-size: 15px;
    font-weight: 500;
    line-height: 34px;
    text-align: center;
    text-decoration: none;
}
.card-btn:first-child {
    padding-right: 6px;
}
.card-price {
    box-sizing: border-box;
    flex: none;
    width: 110px;
    padding: 21px 3px 0 0;
    border-left: 1px solid #bdbbbb;
    text-align: center;
}
.price-from {
    font-size: 15px;
    line-height: 20px;
    color: #6e6e6e;
}
.price-per {
    margin-top: 8px;
    font-size: 13px;
    line-height: 18px;
}

/* map popup over the results */
.map {
    position: absolute;
    left: 310px;
    top: 131px;
    z-index: 2;
    width: 619px;
    height: 467px;
    border: 2px solid #8f8f8f;
    box-shadow: 0 3px 5px rgba(0,0,0,0.35);
    background-color: #f0e9e2;
}
.map-svg {
    display: block;
}
.map-base {
    filter: blur(0.4px);
}
.map-soft {
    filter: blur(0.8px);
}
.map-close {
    position: absolute;
    left: 16px;
    top: 25px;
    width: 56px;
    height: 28px;
    padding: 0;
    border: 1px solid #e8e6e4;
    border-radius: 9px;
    background-color: #a9a5a2;
    box-shadow: 0 0 6px rgba(0,0,0,0.75);
    font-family: Inter, sans-serif;
    font-size: 10.5px;
    font-weight: 500;
    color: #f2f0ee;
}
.map-labels text {
    font-family: Roboto, sans-serif;
    font-size: 11px;
    fill: #4c4c4c;
    text-anchor: middle;
}
.map-labels .lbl-small {
    font-size: 10px;
}
.map-labels .lbl-tiny {
    font-size: 9.5px;
}
.map-labels .lbl-big {
    font-size: 11.5px;
}
.map-labels .lbl-city {
    font-size: 16px;
    font-weight: 500;
    fill: #111;
}
.map-labels .lbl-green {
    font-size: 9.5px;
    fill: #4f9a3e;
}
.map-labels .lbl-case {
    font-size: 9.5px;
    letter-spacing: 1px;
    fill: #8b8ba8;
}
.map-labels .lbl-blue {
    font-size: 9.5px;
    fill: #5a6fc0;
}
.map-shields rect {
    fill: white;
    stroke: #333;
    stroke-width: 1;
}
.map-shields text {
    font-family: Roboto, sans-serif;
    font-size: 8px;
    font-weight: 700;
    fill: #333;
    text-anchor: middle;
}
.shield-blue rect {
    fill: #3f55a8;
    stroke: #3f55a8;
}
.map-shields .shield-blue text {
    fill: white;
}

/* footer */
.footer {
    box-sizing: border-box;
    display: grid;
    grid-template-columns: 188px 141px 172px auto;
    align-items: center;
    height: 79px;
    padding: 0 0 0 467px;
    background-color: #efecea;
}
.footer a {
    display: flex;
    align-items: center;
    gap: 6px;
    font-size: 14px;
    color: #222;
    text-decoration: none;
}

/* annotation canvas */
.notes {
    position: relative;
    height: 550px;
}
.note {
    position: absolute;
    box-sizing: border-box;
    background-color: #faecdc;
    border: 1px solid #e8a24c;
    font-size: 14px;
    line-height: 17px;
    letter-spacing: 0.03px;
    color: #2e2e2e;
}
.note ul {
    list-style-type: "\2022\00a0\2009";
}
.note-class {
    left: 294px;
    top: 19px;
    width: 590px;
    height: 57px;
    padding: 11px 40px 0 0;
}
.note-class ul {
    padding-left: 26px;
}
.note-guest {
    left: 264px;
    top: 176px;
    width: 590px;
    height: 57px;
    padding: 10px 10px 0 0;
}
.note-guest ul {
    padding-left: 26px;
}
.note-slider {
    left: 201px;
    top: 269px;
    width: 590px;
    height: 140px;
    padding: 7px 10px 0 0;
}
.note-slider ul {
    padding-left: 28px;
}
.note-search {
    left: 136px;
    top: 464px;
    width: 584px;
    height: 49px;
    padding: 14px 10px 0 0;
}
.note-search ul {
    padding-left: 28px;
}
.note-hover {
    left: 854px;
    top: 449px;
    width: 591px;
    height: 68px;
    padding: 7px 14px 0 0;
}
.note-hover ul {
    padding-left: 31px;
}
.mini {
    position: absolute;
    box-sizing: border-box;
    background-color: #f2f2f2;
    color: #6c6c6c;
}
.mini-class {
    left: 897px;
    top: 28px;
    width: 199px;
    height: 48px;
    padding: 6px 0 0 9px;
}
.mini-guest {
    left: 883px;
    top: 96px;
    width: 201px;
    height: 56px;
    padding: 4px 0 0 10px;
}
.mini-head {
    display: flex;
    justify-content: space-between;
    align-items: center;
    width: 160px;
    font-size: 13.4px;
    line-height: 15px;
    font-weight: 600;
}
.mini-head .chev {
    stroke: #777;
    stroke-width: 1.4;
    margin-top: 0;
}
.mini-star {
    display: flex;
    align-items: center;
    justify-content: center;
    width: 19px;
    height: 15px;
    margin-top: 8px;
    margin-left: -1px;
    border-radius: 8px;
    background-color: #c6c3c3;
}
.mini-row {
    display: flex;
    gap: 17px;
    margin: 4px 0 0 -2px;
}
.mini-item {
    width: 41px;
}
.mini-item .pill {
    width: 40px;
    height: 18px;
    border-width: 1px;
}
.mini-item .dot {
    width: 7.4px;
    height: 7.4px;
    margin-right: -0.2px;
}
.pill-on {
    background-color: #d0cfcf;
}
.mini-label {
    margin-top: 2px;
    font-size: 8px;
    line-height: 10px;
    font-weight: 600;
    text-align: center;
}
.price-box {
    position: absolute;
    box-sizing: border-box;
    left: 913px;
    top: 208px;
    width: 379px;
    height: 194px;
    padding: 37px 0 0 34px;
    background-color: white;
    border: 1px solid #111;
    border-bottom-color: #555;
    border-right-color: #555;
}
.price-box .section-title {
    margin-top: 4px;
    color: #111;
    -webkit-text-stroke: 0.2px #111;
}
.price-box .section-title small {
    color: #777;
    font-weight: 400;
    -webkit-text-stroke: 0;
}
.price-box .price-grid {
    color: #111;
}
.price-box .price-input {
    margin-left: 1px;
    color: #222;
    font-size: 14px;
    font-weight: 400;
}
.price-box .chev {
    stroke: #222;
    margin-top: -6px;
}
.slider-wide {
    width: 228px;
    margin-left: 15px;
    background-color: #c2c2c2;
}
.slider-fill {
    position: absolute;
    left: 0;
    top: 0;
    width: 79px;
    height: 100%;
    background-color: #63d69b;
}
.knob-set {
    left: 71px;
    background-color: #63d69b;
}

/* orange lines joining the notes to the parts they describe */
.connectors {
    position: absolute;
    left: 0;
    top: 0;
    z-index: 3;
    pointer-events: none;
    fill: none;
    stroke: #e8a656;
    stroke-width: 1;
}
```
